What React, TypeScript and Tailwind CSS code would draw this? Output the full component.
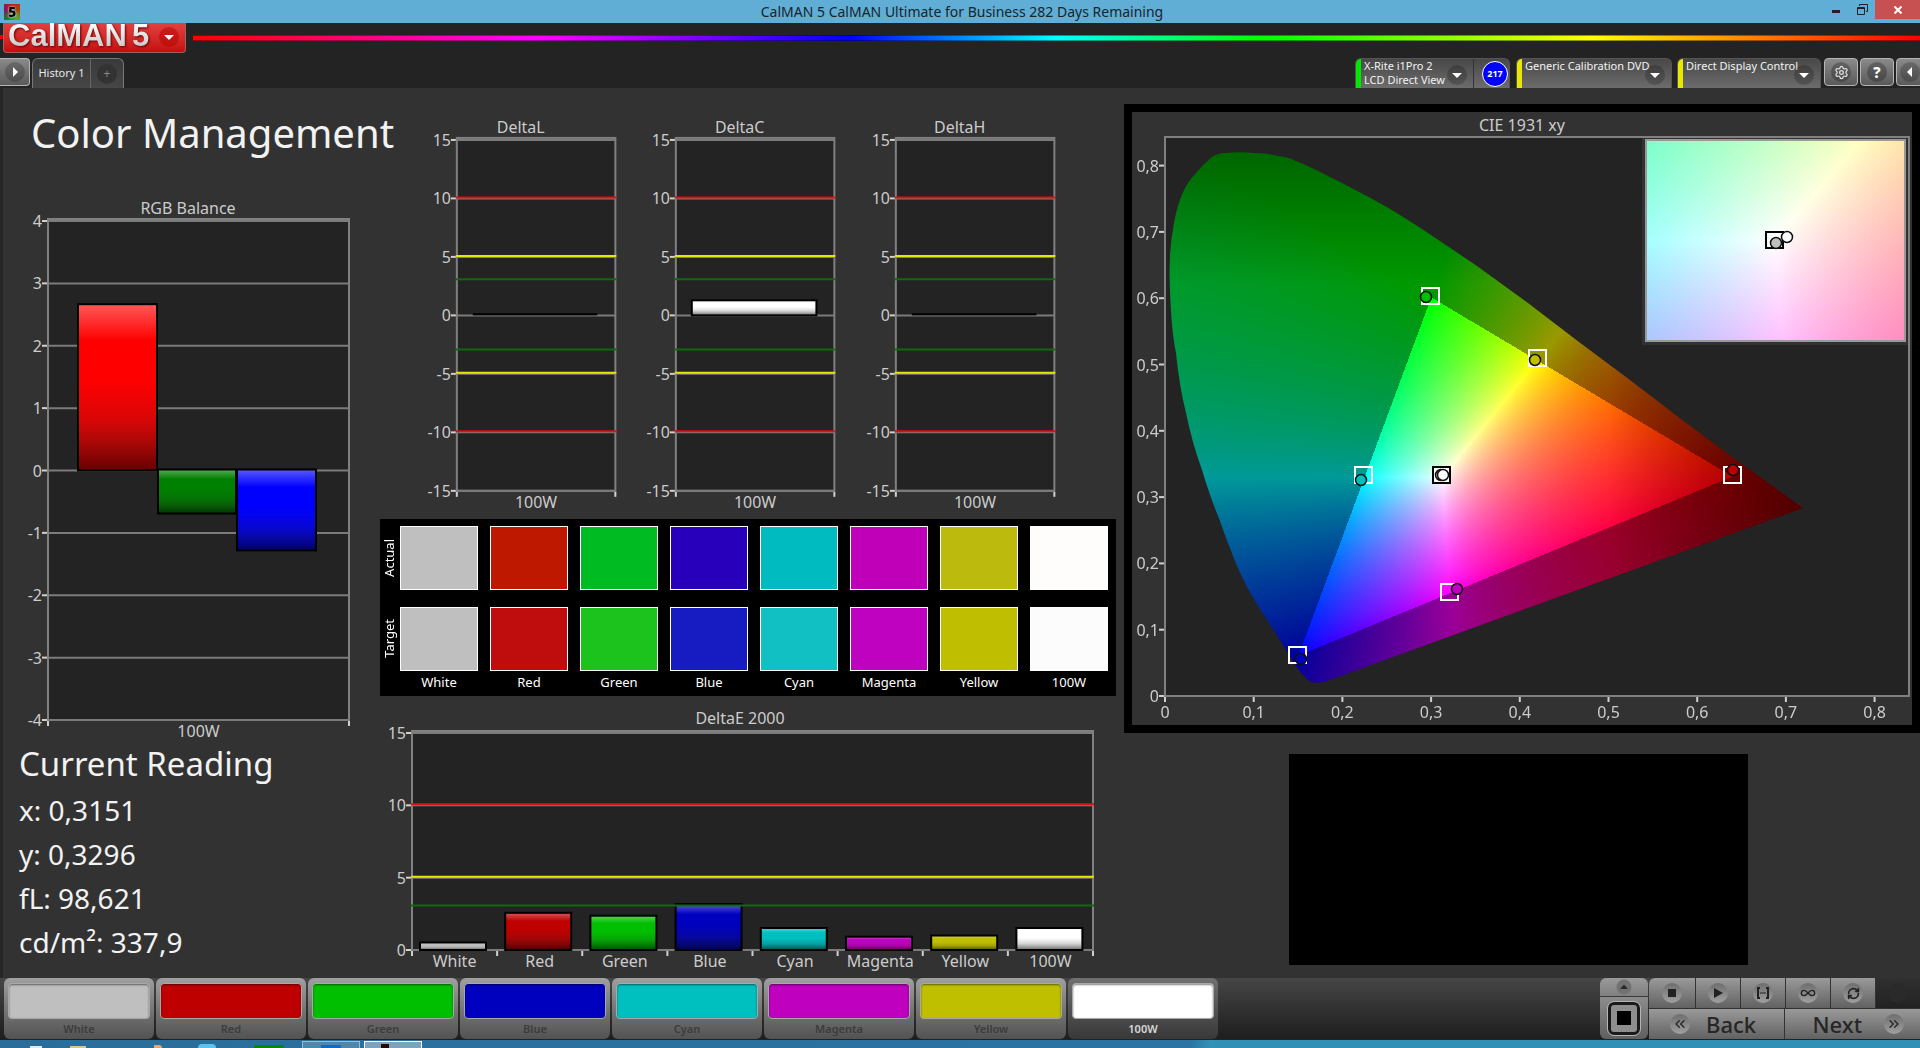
import React, { useEffect, useRef } from 'react';
import { Settings, ChevronsLeft, ChevronsRight, Infinity as InfinityIcon, RefreshCw } from 'lucide-react';

type Bar = { from: number; to: number; x: number; w: number; color: string; id: string };

const COLORS = [
  { name: 'White', fill: '#bfbfbf', actual: '#bfbfbf', target: '#bfbfbf', de: 0.45 },
  { name: 'Red', fill: '#bf0000', actual: '#bf1800', target: '#bf0d0d', de: 2.5 },
  { name: 'Green', fill: '#00bf00', actual: '#00bc22', target: '#1dc31d', de: 2.3 },
  { name: 'Blue', fill: '#0000bf', actual: '#2800bc', target: '#161cc1', de: 3.1 },
  { name: 'Cyan', fill: '#00bfbf', actual: '#00bcc1', target: '#10c0c2', de: 1.45 },
  { name: 'Magenta', fill: '#bf00bf', actual: '#c000b9', target: '#bf02c0', de: 0.85 },
  { name: 'Yellow', fill: '#bfbf00', actual: '#bcba0c', target: '#bfbe00', de: 0.93 },
  { name: '100W', fill: '#ffffff', actual: '#fffcfc', target: '#fcfcfc', de: 1.45 },
];

const LIMITS = [
  { v: 10, color: '#dd1111', w: 2 },
  { v: 5, color: '#e6e600', w: 2 },
  { v: 3, color: '#0f6a0f', w: 2 },
];

interface ChartProps {
  title: string;
  titleX: number;
  width: number;
  height: number;
  plot: { x: number; y: number; w: number; h: number };
  min: number;
  max: number;
  step: number;
  bars: Bar[];
  limits?: { v: number; color: string; w: number }[];
  labels: string[];
}

const Chart: React.FC<ChartProps> = ({ title, titleX, width, height, plot, min, max, step, bars, limits = [], labels }) => {
  const yOf = (v: number) => plot.y + ((max - v) / (max - min)) * plot.h;
  const ticks: number[] = [];
  for (let v = max; v >= min; v -= step) ticks.push(v);
  const slot = plot.w / labels.length;
  const right = plot.x + plot.w;
  const bottom = plot.y + plot.h;

  return (
    <svg viewBox={`0 0 ${width} ${height}`} className="block w-full" role="img" aria-label={title}>
      <text x={titleX} y={18} textAnchor="middle" fontSize={16} fill="#cccccc">{title}</text>
      <rect x={plot.x} y={plot.y - 2} width={plot.w} height={plot.h + 2} fill="#232323" stroke="#808080" strokeWidth={2} />
      {ticks.map((v) => (
        <g key={v}>
          <line x1={plot.x} x2={right} y1={yOf(v)} y2={yOf(v)} stroke="#7b7b7b" strokeWidth={2} />
          <line x1={plot.x - 6} x2={plot.x - 1} y1={yOf(v)} y2={yOf(v)} stroke="#d0d0d0" strokeWidth={2} />
          <text x={plot.x - 6} y={yOf(v) + 6} textAnchor="end" fontSize={16} fill="#cccccc">{v}</text>
        </g>
      ))}
      {bars.map((b) => {
        const top = yOf(Math.max(b.from, b.to));
        const h = Math.abs(yOf(b.from) - yOf(b.to));
        return (
          <g key={b.id}>
            <linearGradient id={b.id} x1="0" x2="0" y1="0" y2="1">
              <stop offset="0" stopColor="#fff" stopOpacity="0.35" />
              <stop offset="0.22" stopColor="#fff" stopOpacity="0" />
              <stop offset="0.45" stopColor="#333" stopOpacity="0" />
              <stop offset="0.7" stopColor="#222" stopOpacity="0.18" />
              <stop offset="1" stopColor="#000" stopOpacity="0.6" />
            </linearGradient>
            <rect x={b.x} y={top - 1} width={b.w} height={h + 1} fill={b.color} />
            {h > 3 && <rect x={b.x} y={top - 1} width={b.w} height={h + 1} fill={`url(#${b.id})`} stroke="#000" strokeWidth={2} />}
          </g>
        );
      })}
      {limits.map((l) => (
        <g key={l.v} stroke={l.color} strokeWidth={l.w}>
          <line x1={plot.x - 1} x2={right + 1} y1={yOf(l.v) - 1} y2={yOf(l.v) - 1} />
          {min < 0 && <line x1={plot.x - 1} x2={right + 1} y1={yOf(-l.v) - 1} y2={yOf(-l.v) - 1} />}
        </g>
      ))}
      {labels.map((l, i) => (
        <g key={l}>
          <line x1={plot.x + i * slot} x2={plot.x + i * slot} y1={bottom + 1} y2={bottom + 6} stroke="#d0d0d0" strokeWidth={2} />
          <text x={plot.x + (i + 0.5) * slot} y={bottom + 17} textAnchor="middle" fontSize={16} fill="#cccccc">{l}</text>
        </g>
      ))}
      <line x1={right} x2={right} y1={bottom + 1} y2={bottom + 6} stroke="#d0d0d0" strokeWidth={2} />
    </svg>
  );
};

// chromaticity -> brightest displayable colour, dimmed outside the Rec.709 triangle
const xyToRgb = (x: number, y: number) => {
  const X = x / y;
  const Z = (1 - x - y) / y;
  const lin = [
    3.2406 * X - 1.5372 - 0.4986 * Z,
    -0.9689 * X + 1.8758 + 0.0415 * Z,
    0.0557 * X - 0.204 + 1.057 * Z,
  ];
  const outside = Math.min(...lin) < 0;
  const pos = lin.map((c) => Math.max(0, c));
  const peak = Math.max(...pos);
  let k = outside ? 0.6 : 1;
  k *= 1 - Math.max(0, x - 0.5) * 2.2;
  k *= 1 - Math.max(0, y - 0.62) * 1.7;
  return pos.map((c) => 255 * k * Math.pow(c / peak, 0.85));
};

const LOCUS =
  'M60 16 C70 15 80 15 90 16 C98 16 106 17 113 19 C120 20 125 21 131 24 C141 28 150 32 159 37 C180 47 200 58 220 69 C236 78 251 88 266 98 L312 129 L363 166 L414 205 L465 243 L516 282 L567 320 L638 371 L162 544 C157 546 150 546 146 545 C141 542 138 538 134 533 C130 528 127 522 123 516 L108 492 C103 484 98 477 93 469 C85 456 78 443 72 429 C66 414 60 399 55 384 C48 367 42 350 37 333 C30 314 25 295 21 276 C16 256 13 236 11 216 C7 196 6 175 5 155 Q4 137 5 118 Q6 102 9 86 Q12 68 19 53 Q24 43 32 35 Q39 26 47 20 Q53 16 60 16 Z';

interface GamutProps {
  w: number;
  h: number;
  x0: number;
  y0: number;
  sx: number;
  sy: number;
  shape?: string;
  label: string;
}

const Gamut: React.FC<GamutProps> = ({ w, h, x0, y0, sx, sy, shape, label }) => {
  const ref = useRef<HTMLCanvasElement>(null);

  useEffect(() => {
    const ctx = ref.current?.getContext('2d');
    if (!ctx) return;
    const img = ctx.createImageData(w, h);
    for (let j = 0; j < h; j++) {
      for (let i = 0; i < w; i++) {
        const y = Math.max(0.002, y0 - j * sy);
        const [r, g, b] = xyToRgb(x0 + i * sx, y);
        const p = (j * w + i) * 4;
        img.data[p] = r;
        img.data[p + 1] = g;
        img.data[p + 2] = b;
        img.data[p + 3] = 255;
      }
    }
    ctx.putImageData(img, 0, 0);
    if (shape) {
      ctx.globalCompositeOperation = 'destination-in';
      ctx.fill(new Path2D(shape));
      ctx.globalCompositeOperation = 'source-over';
    }
  }, [w, h, x0, y0, sx, sy, shape]);

  return <canvas ref={ref} width={w} height={h} className="block h-full w-full" role="img" aria-label={label} />;
};

const MARKERS = [
  { sq: [265, 159], dot: [261, 160], fill: '#00bf00' },
  { sq: [372, 221], dot: [370, 223], fill: '#bfbf00' },
  { sq: [567, 338], dot: [568, 333], fill: '#bf0000' },
  { sq: [198, 338], dot: [196, 343], fill: '#00bfbf' },
  { sq: [132, 518], dot: [136, 522], fill: '#0000bf' },
  { sq: [284, 455], dot: [292, 452], fill: '#bf00bf' },
];

const comma = (n: number) => (n === 0 ? '0' : `0,${n}`);

const CieChart: React.FC = () => (
  <div className="border-8 border-black bg-[#323232]">
    <svg viewBox="0 0 780 613" className="block w-full" role="img" aria-label="CIE 1931 xy chart">
      <text x={390} y={19} textAnchor="middle" fontSize={16} fill="#cccccc">CIE 1931 xy</text>
      <g transform="translate(33 25)">
        <rect x={0} y={0} width={744} height={559} fill="#232323" stroke="#808080" strokeWidth={2} />
        <foreignObject x={0} y={0} width={745} height={558}>
          <Gamut w={745} h={558} x0={0} y0={0.841} sx={1 / 886} sy={1 / 663.5} shape={LOCUS} label="Chromaticity diagram" />
        </foreignObject>
        {[0, 1, 2, 3, 4, 5, 6, 7, 8].map((n) => (
          <g key={n}>
            <line x1={n * 88.7} x2={n * 88.7} y1={560} y2={565} stroke="#d0d0d0" strokeWidth={2} />
            <text x={n * 88.7} y={581} textAnchor="middle" fontSize={16} fill="#cccccc">{comma(n)}</text>
            <line x1={-6} x2={-1} y1={559 - n * 66.3} y2={559 - n * 66.3} stroke="#d0d0d0" strokeWidth={2} />
            <text x={-6} y={565 - n * 66.3} textAnchor="end" fontSize={16} fill="#cccccc">{comma(n)}</text>
          </g>
        ))}
        {MARKERS.map((m) => (
          <g key={m.fill}>
            <rect x={m.sq[0] - 8} y={m.sq[1] - 8} width={17} height={16} fill="none" stroke="#fff" strokeWidth={2} />
            <circle cx={m.dot[0]} cy={m.dot[1]} r={5.5} fill={m.fill} stroke="#111" strokeWidth={1.5} />
          </g>
        ))}
        <rect x={268} y={330} width={17} height={16} fill="#fff" stroke="#000" strokeWidth={2} />
        <circle cx={276} cy={338} r={5.5} fill="#bfbfbf" stroke="#111" strokeWidth={1.5} />
        <circle cx={278} cy={338} r={5.5} fill="#fff" stroke="#111" strokeWidth={1.5} />
        <rect x={477} y={1} width={266} height={207} fill="#323232" />
        <foreignObject x={481} y={3} width={259} height={201}>
          <Gamut w={259} h={201} x0={0.2824} y0={0.362} sx={0.000235} sy={0.00033} label="White point detail" />
        </foreignObject>
        <rect x={481} y={3} width={259} height={201} fill="none" stroke="#999999" strokeWidth={2} />
        <rect x={601} y={95} width={17} height={16} fill="none" stroke="#000" strokeWidth={2} />
        <circle cx={611} cy={106} r={5.5} fill="#bfbfbf" stroke="#111" strokeWidth={1.5} />
        <circle cx={622} cy={100} r={5.5} fill="#fff" stroke="#111" strokeWidth={1.5} />
      </g>
    </svg>
  </div>
);

const Arrow: React.FC<{ d: string }> = ({ d }) => (
  <svg viewBox="0 0 20 20" className="size-5 shrink-0">
    <circle cx="10" cy="10" r="10" fill="#000" opacity="0.2" />
    <path d={d} fill="#fff" />
  </svg>
);

const DOWN = 'M5 8h10l-5 5z';

const Source: React.FC<{ lines: string[]; strip: string; width: string; children?: React.ReactNode }> = ({ lines, strip, width, children }) => (
  <div className={`flex h-[30px] overflow-hidden rounded-t-md border border-b-0 border-[#555] bg-gradient-to-b from-[#484848] to-[#6c6c6c] ${width}`}>
    <span className={`w-[5px] shrink-0 ${strip}`}></span>
    <button className="flex min-w-0 flex-1 items-start justify-between pr-1.5 pl-[3px] text-left text-[11px] leading-[14px] whitespace-nowrap text-[#f2f2f2]">
      <span className="min-w-0">{lines.map((l) => <span key={l} className="block">{l}</span>)}</span>
      <span className="mt-1.5"><Arrow d={DOWN} /></span>
    </button>
    {children}
  </div>
);

const SQUARE_BTN = 'flex h-7 w-[34px] items-center justify-center rounded-sm border border-[#b5b5b5] bg-gradient-to-b from-[#8a8a8a] to-[#5a5a5a]';

const TopBar: React.FC = () => (
  <>
    <div className="relative flex h-[23px] items-center bg-[#60aed5] px-1">
      <span className="flex size-4 items-center justify-center bg-[conic-gradient(#b22,#a40,#5a3,#273,#816,#b22)] text-[14px] leading-4 font-black text-black [text-shadow:0_0_1px_#fff,0_0_2px_#fff]">5</span>
      <h1 className="flex-1 pr-3 text-center text-[14px] text-[#16242c]">CalMAN 5 CalMAN Ultimate for Business 282 Days Remaining</h1>
      <div className="absolute top-0 right-0 flex h-[19px]">
        <button aria-label="Minimize" className="flex w-[26px] items-center justify-center pt-1"><span className="h-[3px] w-2 bg-[#222]"></span></button>
        <button aria-label="Restore" className="flex w-[26px] items-center justify-center">
          <svg width="11" height="11" viewBox="0 0 11 11" fill="none" stroke="#222"><path d="M2.5 2V.5h8v7H9M.5 3.5h7v7h-7zM.5 4.5h7" /></svg>
        </button>
        <button aria-label="Close" className="flex w-[45px] items-center justify-center bg-[#c75050]">
          <svg width="8" height="8" viewBox="0 0 8 8" stroke="#fff" strokeWidth="2"><path d="M.5.5l7 7M7.5.5l-7 7" /></svg>
        </button>
      </div>
    </div>
    <header className="bg-[#232323]">
      <div className="flex h-[35px] items-start">
        <span className="mt-3 h-1 w-[3px] bg-red-600"></span>
        <button className="flex h-[30px] w-[183px] items-start rounded-b-sm border border-t-0 border-[#99645f] bg-gradient-to-b from-[#e14040] to-[#c60a0a] pl-1">
          <span className="w-[124px] bg-gradient-to-b from-white to-[#c4c4c4] bg-clip-text text-left font-['Liberation_Sans'] text-[31px] leading-[26px] font-bold text-transparent drop-shadow-[1px_1px_1px_#600]">CalMAN</span>
          <span className="flex-1 bg-gradient-to-b from-white to-[#c4c4c4] bg-clip-text text-left font-['Liberation_Sans'] text-[31px] leading-[26px] font-bold text-transparent drop-shadow-[1px_1px_1px_#600]">5</span>
          <svg viewBox="0 0 20 20" className="mt-1 mr-1.5 size-5"><circle cx="10" cy="10" r="10" fill="#b50000" opacity="0.5" /><path d="M5 8h10l-5 5z" fill="#fff" /></svg>
        </button>
        <div className="mt-3 ml-[7px] h-1.5 flex-1 border-y border-black/40 bg-[linear-gradient(90deg,#ff0000,#ff00ff_20%,#0000ff_38%,#00ffff_50%,#00ff00_62%,#ffff00_81%,#ff0000)]"></div>
      </div>
      <div className="flex h-[30px] items-start">
        <button aria-label="Show panel" className="flex h-7 w-[30px] items-center justify-center rounded-r-sm border border-l-0 border-[#b5b5b5] bg-gradient-to-b from-[#8a8a8a] to-[#5a5a5a]">
          <Arrow d="M8 5v10l5-5z" />
        </button>
        <div className="ml-0.5 flex h-[30px] rounded-t-md border border-b-0 border-[#777] bg-gradient-to-b from-[#3a3a3a] to-[#464646] text-[12px]">
          <button className="w-[58px] border-r border-[#666] text-[11px] whitespace-nowrap text-[#e8e8e8]">History 1</button>
          <button aria-label="Add history" className="flex w-8 items-center justify-center">
            <span className="flex size-5 items-center justify-center rounded-full bg-[#333] text-[#888]">+</span>
          </button>
        </div>
        <div className="flex-1"></div>
        <Source lines={['X-Rite i1Pro 2', 'LCD Direct View']} strip="bg-[#00e800]" width="w-[155px]">
          <span className="flex w-9 shrink-0 items-center justify-end border-l border-[#333] pr-px">
            <span className="flex size-[26px] items-center justify-center rounded-full border border-white bg-[#0000ff] text-[9px] font-bold text-white">217</span>
          </span>
        </Source>
        <div className="w-1.5"></div>
        <Source lines={['Generic Calibration DVD']} strip="bg-[#e8e800]" width="w-[156px]" />
        <div className="w-[5px]"></div>
        <Source lines={['Direct Display Control']} strip="bg-[#e8e800]" width="w-[144px]" />
        <div className="ml-[3px] flex gap-0.5">
          <button aria-label="Settings" className={SQUARE_BTN}><span className="flex size-5 items-center justify-center rounded-full bg-black/25"><Settings size={15} color="#ddd" /></span></button>
          <button aria-label="Help" className={SQUARE_BTN}><span className="flex size-5 items-center justify-center rounded-full bg-black/25 text-[15px] font-extrabold text-white">?</span></button>
          <div className="w-6 overflow-hidden"><button aria-label="Hide panel" className={`${SQUARE_BTN} pr-1.5`}><Arrow d="M12 5v10l-5-5z" /></button></div>
        </div>
      </div>
    </header>
  </>
);

const LeftColumn: React.FC = () => (
  <section>
    <h2 className="pt-5 pl-7 text-[40px] leading-[50px] whitespace-nowrap text-[#f2f2f2]">Color Management</h2>
    <div className="mt-[38px]">
      <Chart
        title="RGB Balance"
        titleX={185}
        width={377}
        height={548}
        plot={{ x: 45, y: 25, w: 301, h: 499 }}
        min={-4}
        max={4}
        step={1}
        labels={['100W']}
        bars={[
          { id: 'rgb-r', from: 0, to: 2.65, x: 75, w: 79, color: '#ff0000' },
          { id: 'rgb-g', from: 0, to: -0.69, x: 155, w: 78, color: '#008000' },
          { id: 'rgb-b', from: 0, to: -1.28, x: 234, w: 79, color: '#0000ff' },
        ]}
      />
    </div>
    <div className="pl-4 text-[#f2f2f2]">
      <h3 className="text-[33px] leading-[40px]">Current Reading</h3>
      <div className="mt-1 text-[28px] leading-[44px]">
        <p>x: 0,3151</p>
        <p>y: 0,3296</p>
        <p>fL: 98,621</p>
        <p>cd/m²: 337,9</p>
      </div>
    </div>
  </section>
);

const MiddleColumn: React.FC = () => (
  <section className="pt-[27px] pr-2">
    <div className="grid grid-cols-3 pr-[52px] pl-[26px]">
      {[
        { t: 'DeltaL', v: 0.1 },
        { t: 'DeltaC', v: 1.2 },
        { t: 'DeltaH', v: 0.1 },
      ].map((d) => (
        <Chart
          key={d.t}
          title={d.t}
          titleX={115}
          width={220}
          height={405}
          plot={{ x: 51, y: 25, w: 159, h: 352 }}
          min={-15}
          max={15}
          step={5}
          limits={LIMITS}
          labels={['100W']}
          bars={[{ id: d.t, from: 0, to: d.v, x: 67, w: 125, color: d.v > 1 ? '#fff' : '#000' }]}
        />
      ))}
    </div>
    <div className="flex flex-col bg-black pt-[7px] pr-2 text-white">
      {(['actual', 'target'] as const).map((row) => (
        <div key={row} className="mb-[17px] flex">
          <div className="flex w-5 items-center justify-center text-[13px]">
            <span className="rotate-180 capitalize [writing-mode:vertical-rl]">{row}</span>
          </div>
          <div className="grid flex-1 grid-cols-8 gap-x-3">
            {COLORS.map((c) => (
              <div key={c.name} className="h-16 border border-white" style={{ backgroundColor: c[row] }}></div>
            ))}
          </div>
        </div>
      ))}
      <div className="-mt-[17px] grid grid-cols-8 gap-x-3 pb-0.5 pl-5 text-center text-[13px] leading-[23px]">
        {COLORS.map((c) => <span key={c.name}>{c.name}</span>)}
      </div>
    </div>
    <div className="pt-2.5">
      <Chart
        title="DeltaE 2000"
        titleX={360}
        width={736}
        height={270}
        plot={{ x: 32, y: 27, w: 681, h: 217 }}
        min={0}
        max={15}
        step={5}
        limits={LIMITS}
        labels={COLORS.map((c) => c.name)}
        bars={COLORS.map((c, i) => ({ id: `de-${c.name}`, from: 0, to: c.de, x: 40 + i * 85.2, w: 66, color: c.fill }))}
      />
    </div>
  </section>
);

const CELL = 'flex h-[30px] items-center justify-center border-r border-[#333] bg-gradient-to-b from-[#9a9a9a] to-[#626262]';
const DISC = 'flex size-5 items-center justify-center rounded-full bg-gradient-to-b from-[#6e6e6e] to-[#a0a0a0]';

const BottomBar: React.FC = () => (
  <footer className="flex h-[62px] items-stretch border-b border-[#222] bg-gradient-to-b from-[#464646] to-[#1e1e1e] pl-1">
    <div className="flex flex-1 gap-0.5">
      {COLORS.map((c, i) => {
        const active = i === COLORS.length - 1;
        return (
          <button
            key={c.name}
            className={`flex w-[150px] flex-col rounded-md bg-gradient-to-b px-1 pt-[5px] ${active ? 'from-[#707070] to-[#383838]' : 'from-[#a0a0a0] to-[#525252]'}`}
          >
            <span className="block h-[37px] w-full rounded-sm border border-[#a8a8a8] shadow-[inset_0_1px_2px_rgba(0,0,0,0.5)]" style={{ backgroundColor: c.fill }}></span>
            <span className={`block w-full text-center text-[11px] leading-5 font-semibold ${active ? 'text-[#d8d8d8]' : 'text-[#3c3c3c]'}`}>{c.name}</span>
          </button>
        );
      })}
    </div>
    <div className="flex gap-px">
      <div className="flex w-12 flex-col gap-px">
        <button aria-label="Expand" className="flex h-[18px] items-center justify-center rounded-t-md bg-gradient-to-b from-[#9a9a9a] to-[#808080]">
          <svg viewBox="0 0 16 16" className="size-4"><circle cx="8" cy="8" r="7.5" fill="#727272" /><path d="M4 10h8L8 5.500z" fill="#2a2a2a" /></svg>
        </button>
        <button aria-label="Pattern window" className="flex flex-1 items-center justify-center rounded-b-md bg-gradient-to-b from-[#8c8c8c] to-[#606060]">
          <span className="flex h-[33px] w-8 items-center justify-center rounded-md border-[3px] border-[#1a1a1a] bg-[#8e8e8e] outline outline-[#b5b5b5]">
            <span className="h-3.5 w-3.5 bg-black"></span>
          </span>
        </button>
      </div>
      <div className="w-[271px]">
        <div className="grid grid-cols-[47px_45px_45px_45px_45px_1fr]">
          <button aria-label="Stop" className={`${CELL} rounded-tl-md`}><span className={DISC}><span className="size-2 bg-[#222]"></span></span></button>
          <button aria-label="Play" className={CELL}><span className={DISC}><svg width="10" height="10" viewBox="0 0 10 10"><path d="M1 0l9 5-9 5z" fill="#222" /></svg></span></button>
          <button aria-label="Read series" className={CELL}>
            <span className={DISC}>
              <svg width="14" height="12" viewBox="0 0 14 12" fill="none" stroke="#222" strokeWidth="2"><path d="M4 1H2v10h2M10 1h2v10h-2M4.500 6h1M6.500 6h1M8.500 6h1" /></svg>
            </span>
          </button>
          <button aria-label="Continuous" className={CELL}><span className={DISC}><InfinityIcon size={16} color="#222" /></span></button>
          <button aria-label="Refresh" className={CELL}><span className={DISC}><RefreshCw size={13} color="#222" strokeWidth={3} /></span></button>
          <div className="flex items-center justify-center bg-gradient-to-b from-[#303030] to-[#222]"><span className="size-5 rounded-full bg-[#2a2a2a]"></span></div>
        </div>
        <div className="mt-px grid grid-cols-2 text-[22px] leading-[28px] font-medium text-[#262626]">
          <button className="flex h-[30px] items-center gap-4 border-r border-[#333] bg-gradient-to-b from-[#9a9a9a] to-[#626262] pl-[21px]">
            <span className={DISC}><ChevronsLeft size={16} /></span>Back
          </button>
          <button className="flex h-[30px] items-center justify-between bg-gradient-to-b from-[#9a9a9a] to-[#626262] pr-4 pl-7">
            Next<span className={DISC}><ChevronsRight size={16} /></span>
          </button>
        </div>
      </div>
    </div>
  </footer>
);

const Taskbar: React.FC = () => (
  <div className="flex h-2 items-end overflow-hidden bg-[linear-gradient(100deg,#2a6d9a_0%,#2b74a4_62%,#3190b5_63%,#3190b5_100%)] pl-[30px]">
    <span className="h-0.5 w-3 bg-slate-200"></span>
    <span className="ml-7 h-0.5 w-4 bg-[#d8c690]"></span>
    <span className="ml-[68px] h-[3px] w-2 rounded-tr-md bg-[#e0a878]"></span>
    <span className="ml-9 h-1 w-[18px] rounded-t-full bg-[#5cc3ea]"></span>
    <span className="ml-[38px] h-[3px] w-[30px] bg-[#078807]"></span>
    <span className="ml-[18px] flex h-[7px] w-[58px] items-end justify-center border border-b-0 border-[#9abcd2] bg-[#4f86ab]"><span className="h-[3px] w-5 bg-[#0a6cc8]"></span></span>
    <span className="ml-1 flex h-[7px] w-[58px] items-end border border-b-0 border-white bg-[#7aa3bf] pl-4"><span className="h-1 w-2 bg-[#250808]"></span></span>
  </div>
);

export default function App() {
  return (
    <div className="flex min-h-screen flex-col bg-[#323232] font-['Noto_Sans',sans-serif]">
      <TopBar />
      <main className="grid flex-1 grid-cols-[minmax(0,377fr)_minmax(0,744fr)_minmax(0,796fr)] content-start border-l-[3px] border-[#262626]">
        <LeftColumn />
        <MiddleColumn />
        <section className="pt-4">
          <CieChart />
          <div className="mt-[21px] ml-[165px] h-[211px] w-[459px] bg-black"></div>
        </section>
      </main>
      <BottomBar />
      <Taskbar />
    </div>
  );
}
